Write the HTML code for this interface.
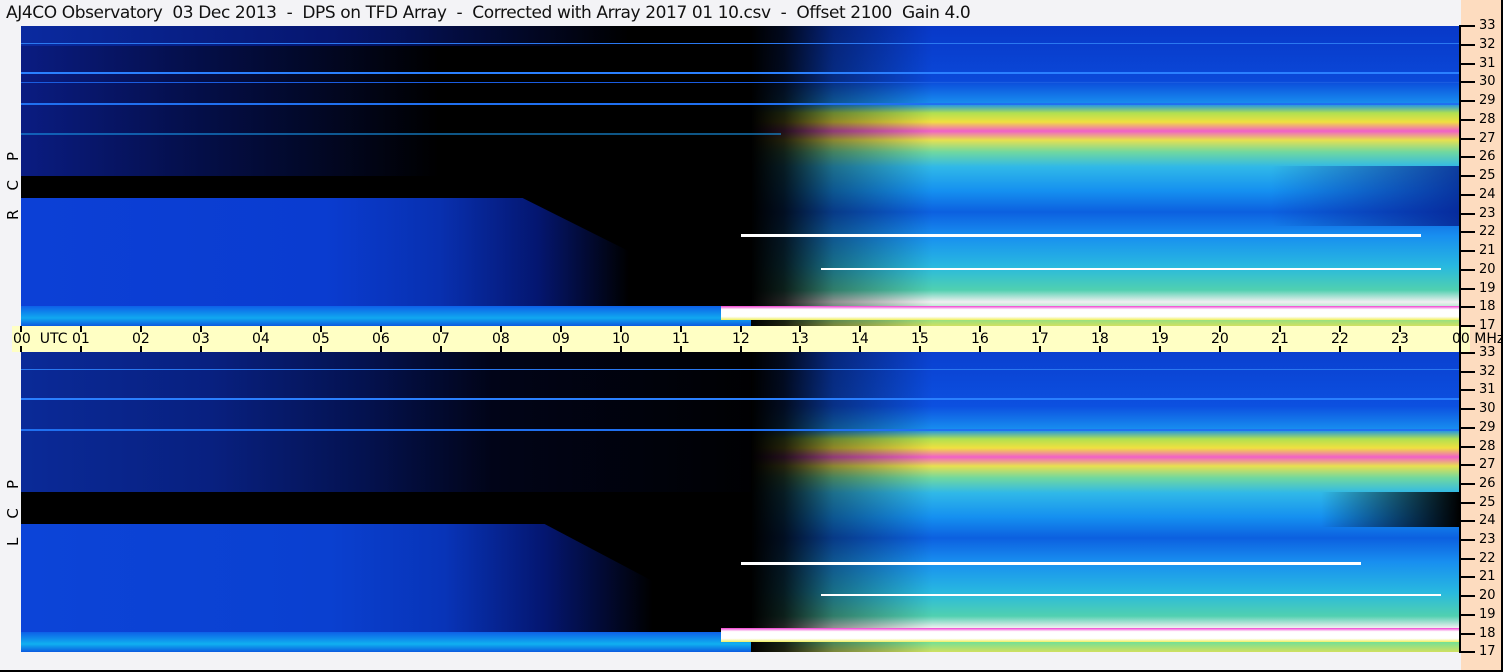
<!DOCTYPE html>
<html><head><meta charset="utf-8"><style>
*{margin:0;padding:0;box-sizing:border-box}
body{width:1503px;height:672px;background:#f3f3f6;position:relative;overflow:hidden;font-family:"Liberation Sans","DejaVu Sans",sans-serif}
.abs{position:absolute}
#title{left:6px;top:3px;font-size:17px;color:#111;white-space:pre;font-family:"DejaVu Sans","Liberation Sans",sans-serif;letter-spacing:-0.4px}
#peach{left:1461px;top:0;width:40px;height:670px;background:#fddcbf}
#rborder{left:1501px;top:0;width:2px;height:672px;background:#000}
#bborder{left:0;top:670px;width:1503px;height:2px;background:#000}
#axis{left:1459px;top:25px;width:2px;height:628px;background:#000}
.tk{position:absolute;left:1461px;width:14px;height:2px;background:#000}
.tl{position:absolute;left:1479px;font-size:13px;color:#000;font-family:"DejaVu Sans",sans-serif;line-height:13px}
#ubar{left:12px;top:326px;width:1458px;height:26px;background:#ffffc4}
.ht{position:absolute;width:2px;background:#000}
.hl{position:absolute;top:331px;font-size:14px;color:#000;font-family:"DejaVu Sans",sans-serif;white-space:nowrap}
.pan{position:absolute;left:21px;width:1439px;height:300px;background:#000;overflow:hidden}
.pan div{position:absolute}
.side{position:absolute;left:4px;font-size:15px;font-family:"DejaVu Sans",sans-serif;transform:rotate(-90deg);transform-origin:left top;white-space:nowrap}
</style></head><body>
<div class="abs" id="title">AJ4CO Observatory  03 Dec 2013  -  DPS on TFD Array  -  Corrected with Array 2017 01 10.csv  -  Offset 2100  Gain 4.0</div>
<div class="abs" id="peach"></div>

<!-- top panel -->
<div class="pan" style="top:26px">
 <div style="left:0;top:0;width:760px;height:150px;background:linear-gradient(90deg,#0a1c82 0%,#051050 20%,#020828 38%,#000 55%,#000 100%)"></div>
 <div style="left:0;top:0;width:760px;height:20px;background:linear-gradient(90deg,#0a2aa0,#061670 40%,rgba(0,0,0,0) 80%)"></div>
 <div style="left:0;top:172px;width:760px;height:118px;background:linear-gradient(90deg,#0c40d6 0%,#0a3cd0 40%,#0830b0 55%,#041670 68%,#000 80%);clip-path:polygon(0 0,66% 0,97% 100%,0 100%)"></div>
 <div style="left:0;top:280px;width:740px;height:20px;background:linear-gradient(180deg,#0d60e8,#10a8f0 60%,#0b5ae0)"></div>
 <div style="left:730px;top:0;width:709px;height:300px;background:linear-gradient(180deg,#0838c8 0%,#0a48d8 18%,#1890f0 26%,#b0e050 29%,#f0e040 32%,#f060c8 35%,#e8e050 38%,#70d8a0 42%,#30b8e8 47%,#1590f0 55%,#0c60e0 62%,#188ff0 70%,#28b8e0 80%,#50d0b0 88%,#f0f0f0 92%,#60e0a0 96%,#d0e060 100%)"></div>
 <div style="left:730px;top:0;width:330px;height:300px;background:linear-gradient(90deg,#000 0%,rgba(0,0,0,.85) 10%,rgba(0,0,0,.4) 25%,rgba(0,0,0,0) 55%)"></div>
 <div style="left:1250px;top:140px;width:189px;height:60px;background:linear-gradient(90deg,rgba(5,30,140,0),rgba(5,30,140,.8))"></div>
 <div style="left:0;top:17px;width:1439px;height:1px;background:#2a78f0"></div>
 <div style="left:0;top:46px;width:1439px;height:2px;background:#2a80ff"></div>
 <div style="left:0;top:56px;width:1439px;height:1px;background:#1a5ce0"></div>
 <div style="left:0;top:77px;width:1439px;height:2px;background:#2070f0"></div>
 <div style="left:0;top:107px;width:760px;height:2px;background:#1890e0;opacity:.6"></div>
 <div style="left:720px;top:208px;width:680px;height:3px;background:#fff"></div>
 <div style="left:800px;top:242px;width:620px;height:2px;background:#fff"></div>
 <div style="left:700px;top:280px;width:739px;height:14px;background:linear-gradient(180deg,#f040d0,#fff 25%,#fff 75%,#f0f060)"></div>
</div>

<!-- bottom panel -->
<div class="pan" style="top:352px">
 <div style="left:0;top:0;width:760px;height:140px;background:linear-gradient(90deg,#0a2a98 0%,#082080 25%,#041250 45%,#010418 62%,#000 100%)"></div>
 <div style="left:0;top:172px;width:770px;height:118px;background:linear-gradient(90deg,#0c44d8 0%,#0a40d0 40%,#0834b8 55%,#041670 68%,#000 82%);clip-path:polygon(0 0,68% 0,97% 100%,0 100%)"></div>
 <div style="left:0;top:280px;width:740px;height:20px;background:linear-gradient(180deg,#0d60e8,#10b0f0 60%,#0b5ae0)"></div>
 <div style="left:730px;top:0;width:709px;height:300px;background:linear-gradient(180deg,#0a40d0 0%,#0c50e0 18%,#1890f0 26%,#b0e050 29%,#f0e040 32%,#f060c8 35%,#e8e050 38%,#70d8a0 42%,#30b8e8 47%,#1590f0 55%,#0c60e0 62%,#188ff0 70%,#28b8e0 80%,#50d0b0 88%,#f0f0f0 92%,#60e0a0 96%,#d0e060 100%)"></div>
 <div style="left:730px;top:0;width:330px;height:300px;background:linear-gradient(90deg,#000 0%,rgba(0,0,0,.85) 10%,rgba(0,0,0,.4) 25%,rgba(0,0,0,0) 55%)"></div>
 <div style="left:1300px;top:140px;width:139px;height:35px;background:linear-gradient(90deg,rgba(0,0,0,0),#000)"></div>
 <div style="left:0;top:17px;width:1439px;height:1px;background:#2a78f0"></div>
 <div style="left:0;top:46px;width:1439px;height:2px;background:#2a80ff"></div>
 <div style="left:0;top:77px;width:1439px;height:2px;background:#2070f0"></div>
 <div style="left:720px;top:210px;width:620px;height:3px;background:#fff"></div>
 <div style="left:800px;top:242px;width:620px;height:2px;background:#fff"></div>
 <div style="left:700px;top:276px;width:739px;height:14px;background:linear-gradient(180deg,#f040d0,#fff 25%,#fff 75%,#f0f060)"></div>
</div>

<div class="side" style="top:220px">R&nbsp;&nbsp;&nbsp;&nbsp;C&nbsp;&nbsp;&nbsp;&nbsp;P</div>
<div class="side" style="top:546px">L&nbsp;&nbsp;&nbsp;&nbsp;C&nbsp;&nbsp;&nbsp;&nbsp;P</div>

<div class="abs" id="ubar"></div>
<div class="abs" id="axis"></div>
<div class="abs" id="rborder"></div>
<div class="abs" id="bborder"></div>
<div id="ticks"></div>
<script>
var h='';
for(var i=0;i<=16;i++){var v=33-i;var y1=Math.round(25+i*18.75),y2=Math.round(352+i*18.7);
h+='<div class="tk" style="top:'+y1+'px"></div><div class="tl" style="top:'+(y1-6)+'px">'+v+'</div>';
h+='<div class="tk" style="top:'+y2+'px"></div><div class="tl" style="top:'+(y2-6)+'px">'+v+'</div>';}
for(var k=0;k<=24;k++){var x=Math.round(21+k*59.96);
h+='<div class="ht" style="left:'+(x-1)+'px;top:326px;height:6px"></div><div class="ht" style="left:'+(x-1)+'px;top:346px;height:6px"></div>';
var lab=(k%24<10?'0':'')+(k%24);
if(k==0)h+='<div class="hl" style="left:13px">00&nbsp; UTC</div>';
else if(k==24)h+='<div class="hl" style="left:1452px">00 MHz</div>';
else h+='<div class="hl" style="left:'+(x-9)+'px">'+lab+'</div>';}
document.getElementById('ticks').innerHTML=h;
</script>
</body></html>
